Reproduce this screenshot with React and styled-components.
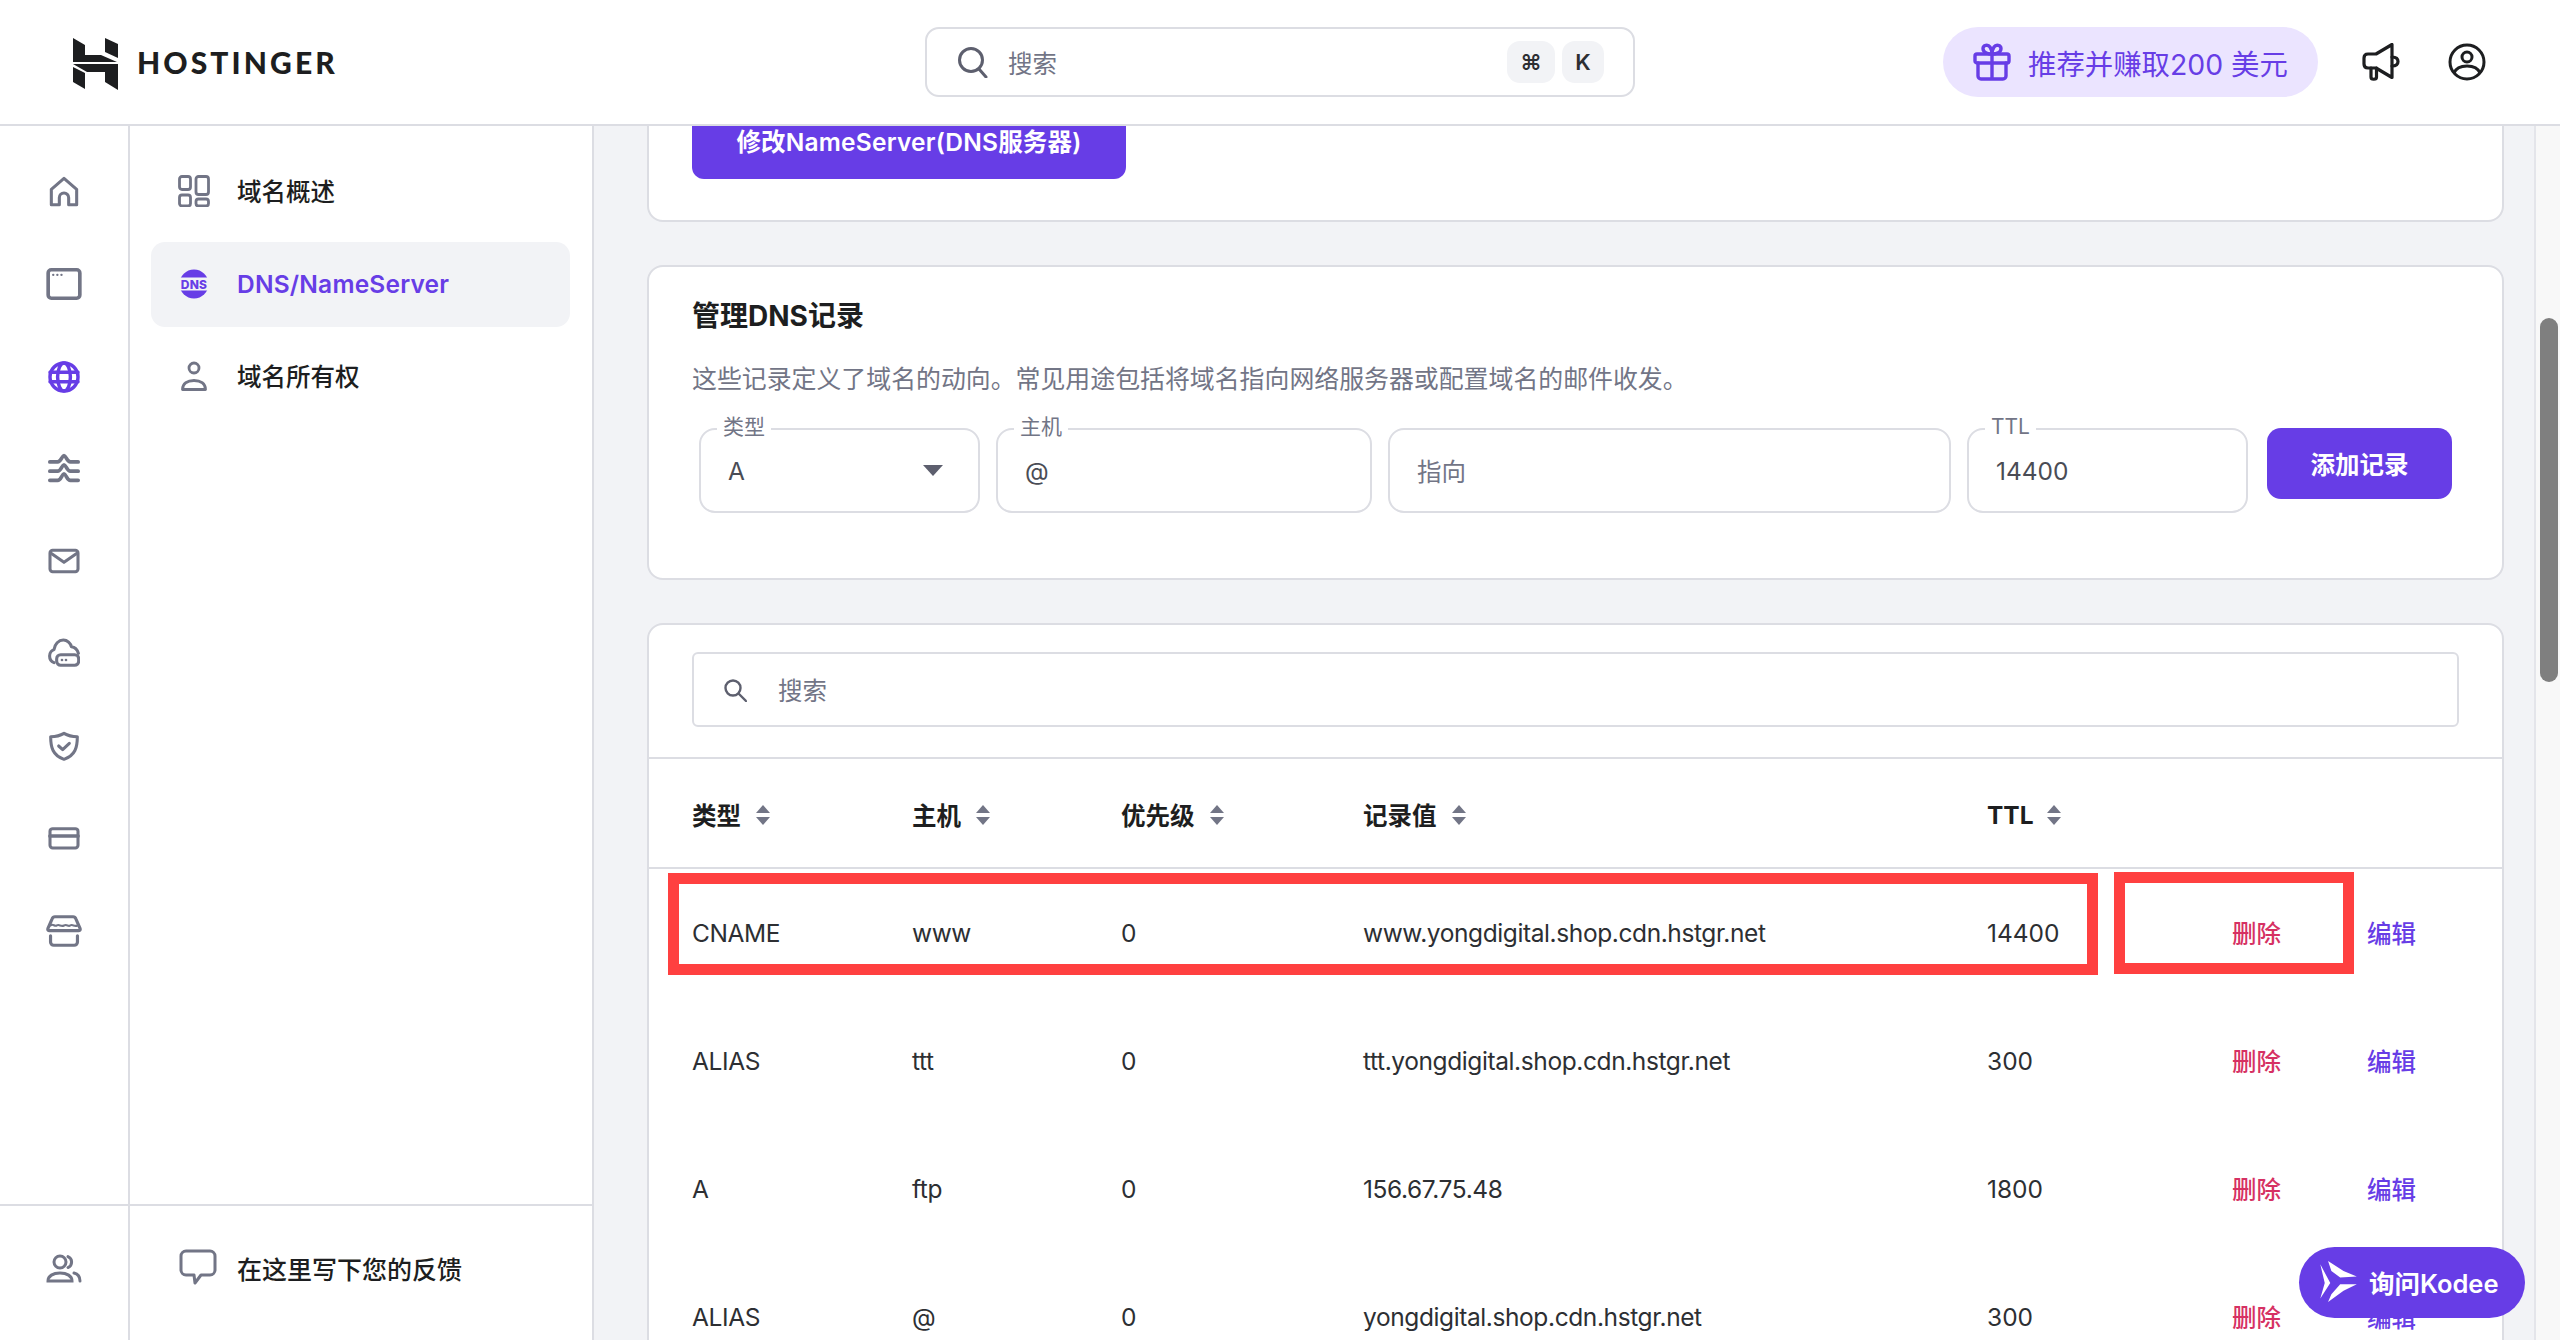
import React from "react";
import styled, { createGlobalStyle } from "styled-components";

const Global = createGlobalStyle`
  html, body { margin: 0; padding: 0; background: #fff; }
  * { box-sizing: border-box; }
  body { font-family: "Inter", "Noto Sans CJK SC", sans-serif; color: #1d1e20; }
`;

const Page = styled.div`width: 2560px; height: 1340px; display: flex; flex-direction: column; overflow: hidden; background: #fff;`;
const Header = styled.header`height: 126px; flex: none; display: flex; align-items: center; padding: 0 74px 0 64px; border-bottom: 2px solid #dcdde3; background: #fff;`;
const Brand = styled.div`width: 861px; display: flex; align-items: center; flex: none;`;
const LogoMark = styled.svg`width: 64px; height: 64px; flex: none; display: block;`;
const LogoText = styled.span`font-family: "Lato", sans-serif; font-weight: 900; font-size: 30px; letter-spacing: 3.1px; margin-left: 9px; color: #1d1e20;`;
const TopSearch = styled.div`width: 710px; height: 70px; border: 2px solid #dcdde3; border-radius: 14px; display: flex; align-items: center; padding: 0 29px 0 30px; flex: none;`;
const TopPlaceholder = styled.span`margin-left: 19px; font-size: 24.5px; color: #727586; flex: 1;`;
const Kbd = styled.span`width: ${p => p.$w}px; height: 42px; margin-left: ${p => p.$ml}px; border-radius: 13px; background: #f2f3f6; display: flex; align-items: center; justify-content: center; font-size: 22px; font-weight: 600; color: #2d2f33;`;
const Pill = styled.div`margin-left: auto; margin-right: -1px; width: 375px; height: 70px; border-radius: 35px; background: #ebe4ff; display: flex; align-items: center; padding-left: 30px; color: #673de6; font-size: 28.4px; flex: none;`;
const PillText = styled.span`margin-left: 17px; white-space: nowrap;`;
const HeaderIcon = styled.div`margin-left: ${p => p.$ml}px; display: flex; flex: none;`;

const Body = styled.div`flex: 1; display: flex; min-height: 0;`;
const Rail = styled.nav`width: 130px; flex: none; border-right: 2px solid #dcdde3; display: flex; flex-direction: column;`;
const RailList = styled.div`flex: 1; padding-top: 20px; display: flex; flex-direction: column;`;
const RailItem = styled.div`height: 92.3px; display: flex; align-items: center; justify-content: center; flex: none;`;
const Foot = styled.div`height: 136px; flex: none; border-top: 2px solid #dcdde3; display: flex; align-items: center; ${p => p.$center ? "justify-content: center; padding-bottom: 8px;" : "padding: 0 0 10px 49px;"}`;
const Panel = styled.aside`width: 464px; flex: none; border-right: 2px solid #dcdde3; display: flex; flex-direction: column;`;
const PanelList = styled.div`flex: 1; padding: 23px 22px 0 21px; display: flex; flex-direction: column;`;
const PanelItem = styled.div`height: 85px; margin-bottom: 7.5px; border-radius: 14px; display: flex; align-items: center; padding: 0 0 ${p => p.$active ? 1 : 2}px 21px; background: ${p => p.$active ? "#f2f3f6" : "transparent"}; color: ${p => p.$active ? "#673de6" : "#1d1e20"}; font-weight: ${p => p.$active ? 600 : 500}; font-size: 24.5px; letter-spacing: ${p => p.$active ? "0.2px" : "0"};`;
const IconSlot = styled.span`width: 44px; height: 44px; display: flex; align-items: center; justify-content: center; flex: none; margin-right: 21px;`;
const FootText = styled.span`font-size: 25px; font-weight: 500; margin-left: 20px;`;

const Main = styled.main`flex: 1; min-width: 0; background: #f2f3f6; overflow: hidden; padding: 0 30px 0 53px; display: flex; flex-direction: column; position: relative;`;
const Card = styled.section`background: #fff; border: 2px solid #dcdde3; border-radius: 16px; flex: none; margin-bottom: 43px;`;
const ScrolledCard = styled(Card)`margin-top: -62px; padding: 41px 43px;`;
const DnsButton = styled.div`width: 434px; height: 72px; background: #673de6; border-radius: 12px; color: #fff; font-weight: 600; font-size: 24.5px; letter-spacing: 0.2px; display: flex; align-items: center; justify-content: center; padding-bottom: 6px;`;
const FormCard = styled(Card)`padding: 28px 48px 65px 43px;`;
const Title = styled.h2`margin: 0; font-size: 28px; line-height: 42px; font-weight: 700; color: #1d1e20;`;
const Desc = styled.p`margin: 24px 0 0; font-size: 24.9px; line-height: 36px; color: #727586;`;
const FormRow = styled.div`display: grid; grid-template-columns: 281px 376px 563px 281px 185px; column-gap: 16px; margin: 31px 0 0 7px; align-items: start;`;
const Field = styled.div`height: 85px; position: relative; border: 2px solid #dcdde3; border-radius: 16px; display: flex; align-items: center; padding-left: 27px; padding-right: ${p => p.$pr || 22}px; font-size: 24.5px; color: ${p => p.$muted ? "#727586" : "#4a4c55"};`;
const Legend = styled.span`position: absolute; top: -15px; left: 16px; padding: 0 6px; background: #fff; font-size: 21px; line-height: 24px; color: #727586;`;
const FieldValue = styled.span`flex: 1;`;
const Caret = styled.span`width: 0; height: 0; border-left: 10.5px solid transparent; border-right: 10.5px solid transparent; border-top: 11px solid #5d5f6e;`;
const AddButton = styled.div`height: 71px; margin-left: 3px; width: 185px; background: #673de6; color: #fff; border-radius: 14px; display: flex; align-items: center; justify-content: center; font-size: 24.5px; font-weight: 600;`;

const TableCard = styled(Card)`position: relative; margin-bottom: 0;`;
const SearchWrap = styled.div`padding: 27px 43px 30px 43px; border-bottom: 2px solid #dcdde3;`;
const TableSearch = styled.div`height: 75px; border: 2px solid #dcdde3; border-radius: 6px; display: flex; align-items: center; padding-left: 29px; font-size: 24.5px; color: #727586;`;
const TableSearchText = styled.span`margin-left: 31px;`;
const Row = styled.div`display: grid; grid-template-columns: 220px 209px 242px 624px 245px 135px 1fr; padding-left: 43px; align-items: center; height: ${p => p.$head ? 110 : 128}px; ${p => p.$head ? "border-bottom: 2px solid #dcdde3;" : ""}`;
const HeadCell = styled.div`display: flex; align-items: center; font-size: 24.5px; font-weight: 700; color: #1d1e20; padding-top: 3px;`;
const SortIcon = styled.svg`width: 16px; height: 20px; margin-left: ${p => p.$ml || 14}px; display: block;`;
const Cell = styled.div`font-size: 24.5px; color: #2d2f33; white-space: nowrap; letter-spacing: ${p => p.$tight ? "-0.4px" : "0"};`;
const DeleteLink = styled.div`font-size: 24.5px; font-weight: 500; color: #d63163; margin-top: -2px;`;
const EditLink = styled.div`font-size: 24.5px; font-weight: 500; color: #673de6; margin-top: -2px;`;
const Mark = styled.div`position: absolute; border: 11px solid #ff4040; pointer-events: none; left: ${p => p.$l}px; top: ${p => p.$t}px; width: ${p => p.$w}px; height: 102px;`;
const Kodee = styled.div`position: absolute; left: 1705px; top: 1121px; width: 226px; height: 71px; border-radius: 36px; background: #673de6; color: #fff; display: flex; align-items: center; padding: 0 0 2px 20px; font-size: 25.5px; font-weight: 600; z-index: 2;`;
const KodeeText = styled.span`margin-left: 12px; white-space: nowrap;`;
const Track = styled.div`width: 26px; flex: none; border-left: 2px solid #e4e5ea; background: #f8f8f8; padding: 192px 2px 0 4px;`;
const Thumb = styled.div`height: 364px; border-radius: 10px; background: #7f7f7f;`;

const G = "#727586";
const P = "#673de6";
const RailIcon = ({ children, color = G, w = 32, h = 32, sw = 2.3 }) => (
  <svg width={w} height={h} viewBox="0 0 24 24" fill="none" stroke={color} strokeWidth={sw} strokeLinecap="round" strokeLinejoin="round">{children}</svg>
);

const railIcons = [
  <RailIcon key="h"><path d="M2.5 21.500V10L12 1.800 21.500 10v11.500h-6v-5.200a3.500 3.500 0 0 0-7 0v5.200z" /></RailIcon>,
  <RailIcon key="b" w={38} h={38}><rect x="2" y="3" width="20" height="18" rx="2" /><path d="M5.200 6.200h.01M7.800 6.200h.01M10.400 6.200h.01" strokeWidth="1.500" /></RailIcon>,
  <RailIcon key="g" color={P} sw={2.6}><circle cx="12" cy="12" r="10.500" /><ellipse cx="12" cy="12" rx="4.800" ry="10.500" /><path d="M1.500 8.500h21M1.500 15.500h21" /></RailIcon>,
  <RailIcon key="w" w={34} h={34} sw={2.6}><path d="M2 7h5.500c2.500 0 3-4.500 4.500-4.500S14 7 16.500 7H22" /><path d="M2 13.500h5.500c2.500 0 3-4.500 4.500-4.500s2 4.500 4.500 4.500H22" /><path d="M2 20h5.500c2.500 0 3-4.500 4.500-4.500s2 4.500 4.500 4.500H22" /></RailIcon>,
  <RailIcon key="m"><rect x="1.500" y="4" width="21" height="16" rx="2" /><path d="M2 6l10 7 10-7" /></RailIcon>,
  <RailIcon key="c"><path d="M4.500 18.500C2 17.500 1.200 15.500 1.200 13.500 1.200 11 3 9.200 4.500 8.700 5 4.500 8 1.500 11.500 1.500c3 0 5.500 2.500 6 5 2.500.3 4.500 2 5.300 5" /><rect x="6.500" y="12.500" width="16.500" height="8" rx="3" /><path d="M10.500 16.500h.01M13.500 16.500h.01" strokeWidth="2" /></RailIcon>,
  <RailIcon key="s"><path d="M12 2.500c3 1.800 6.500 2.500 10 2.500 0 8-1.500 14-10 17C3.500 19 2 13 2 5c3.500 0 7-.7 10-2.500z" /><path d="M8 12l3 2.700 5-4.700" /></RailIcon>,
  <RailIcon key="p"><rect x="1.500" y="5" width="21" height="14.500" rx="2" /><path d="M1.500 10.500h21" strokeWidth="2.800" /></RailIcon>,
  <RailIcon key="t" w={38} h={38} sw={2}><path d="M1.800 10.500L4.500 4.300A2 2 0 0 1 6.300 3h11.400a2 2 0 0 1 1.800 1.300l2.700 6.200c.3 1-.3 1.300-1 1.300H2.800c-.7 0-1.300-.3-1-1.300z" /><path d="M3.500 8.500c1.500-1.500 2.500 1 4 0s2.500 1 4.500 0 2.500 1 4 0 2.500 1 4.500 0" strokeWidth="1.300" /><path d="M3.500 15v4a2 2 0 0 0 2 2h13a2 2 0 0 0 2-2v-4" /></RailIcon>,
];

const rows = [
  ["CNAME", "www", "0", "www.yongdigital.shop.cdn.hstgr.net", "14400"],
  ["ALIAS", "ttt", "0", "ttt.yongdigital.shop.cdn.hstgr.net", "300"],
  ["A", "ftp", "0", "156.67.75.48", "1800"],
  ["ALIAS", "@", "0", "yongdigital.shop.cdn.hstgr.net", "300"],
];

const Sort = ({ ml }) => (
  <SortIcon $ml={ml} viewBox="0 0 16 20"><path d="M8 0L15 8H1z M8 20L15 12H1z" fill={G} /></SortIcon>
);

const Head = ({ label, ml }) => <HeadCell>{label}<Sort ml={ml} /></HeadCell>;

export default function App() {
  return (
    <Page>
      <Global />
      <Header>
        <Brand>
          <LogoMark viewBox="0 0 64 64">
            <g fill="#1d1e20">
              <polygon points="9,8 21,15 21,25 37,25 53,32 9,32" />
              <polygon points="41,8 54,14 54,28 41,22" />
              <polygon points="9,37 21,43 21,59 9,52" />
              <polygon points="9,34 54,34 54,60 41,52 41,42 23,42" />
            </g>
          </LogoMark>
          <LogoText>HOSTINGER</LogoText>
        </Brand>
        <TopSearch>
          <svg width="32" height="32" viewBox="0 0 32 32" fill="none" stroke="#5d5f6e" strokeWidth="3" strokeLinecap="round"><circle cx="14" cy="14" r="11.500" /><path d="M22 23l7 8" /></svg>
          <TopPlaceholder>搜索</TopPlaceholder>
          <Kbd $w={48} $ml={0}>⌘</Kbd>
          <Kbd $w={42} $ml={7}>K</Kbd>
        </TopSearch>
        <Pill>
          <svg width="38" height="38" viewBox="0 0 38 38" fill="none" stroke={P} strokeWidth="3.400" strokeLinejoin="round" strokeLinecap="round"><rect x="2" y="11" width="34" height="9" rx="2" /><path d="M5 20v13a3 3 0 0 0 3 3h22a3 3 0 0 0 3-3V20M19 11v25" /><path d="M19 11c-3 0-9-1-9-5.500C10 2 15 1 17 4c1 1.500 2 4 2 7 0-3 1-5.500 2-7 2-3 7-2 7 1.500C28 10 22 11 19 11z" /></svg>
          <PillText>推荐并赚取200 美元</PillText>
        </Pill>
        <HeaderIcon $ml={45}>
          <svg width="38" height="38" viewBox="0 0 38 38" fill="none" stroke="#1d1e20" strokeWidth="3.200" strokeLinecap="round" strokeLinejoin="round"><path d="M2 15c0-2 1-4 4-4h8L30 1.500v33L14 25H6c-3 0-4-2-4-4z" /><path d="M30 14c4 0 6 2 6 4.500S34 23 30 23" /><path d="M9 25v9c0 3 5.500 3 5.500 0v-9" /></svg>
        </HeaderIcon>
        <HeaderIcon $ml={48}>
          <svg width="38" height="38" viewBox="0 0 38 38" fill="none" stroke="#1d1e20" strokeWidth="3"><circle cx="19" cy="19" r="17" /><circle cx="19" cy="14" r="5" /><path d="M6 30c2-5 7-7 13-7s11 2 13 7" /></svg>
        </HeaderIcon>
      </Header>
      <Body>
        <Rail>
          <RailList>{railIcons.map((ic, i) => <RailItem key={i}>{ic}</RailItem>)}</RailList>
          <Foot $center>
            <svg width="36" height="30" viewBox="0 0 36 30" fill="none" stroke={G} strokeWidth="3" strokeLinecap="round"><circle cx="14" cy="8" r="6" /><path d="M2 27c0-5 5-8 12-8s12 3 12 8z" /><path d="M22 2.500a6 6 0 0 1 0 11M28 19c4 1 6 4 6 8" /></svg>
          </Foot>
        </Rail>
        <Panel>
          <PanelList>
            <PanelItem>
              <IconSlot>
                <svg width="32" height="32" viewBox="0 0 32 32" fill="none" stroke={G} strokeWidth="2.800"><rect x="1.500" y="1.500" width="11" height="13" rx="2.500" /><rect x="18" y="1.500" width="12.500" height="18" rx="2.500" /><rect x="1.500" y="20" width="11" height="11" rx="2.500" /><rect x="18" y="24" width="12.500" height="7" rx="2.500" /></svg>
              </IconSlot>
              域名概述
            </PanelItem>
            <PanelItem $active>
              <IconSlot>
                <svg width="30" height="30" viewBox="0 0 30 30"><circle cx="15" cy="15" r="14.500" fill={P} /><rect x="0" y="8.500" width="30" height="13" fill="#f2f3f6" /><text x="15" y="19.500" textAnchor="middle" fontFamily="Inter, sans-serif" fontWeight="800" fontSize="12" fill={P}>DNS</text></svg>
              </IconSlot>
              DNS/NameServer
            </PanelItem>
            <PanelItem>
              <IconSlot>
                <svg width="26" height="30" viewBox="0 0 26 30" fill="none" stroke={G} strokeWidth="2.800" strokeLinejoin="round"><circle cx="13" cy="7" r="5" /><path d="M1.500 28.500c0-6 5-9 11.500-9s11.500 3 11.500 9z" /></svg>
              </IconSlot>
              域名所有权
            </PanelItem>
          </PanelList>
          <Foot>
            <svg width="38" height="38" viewBox="0 0 38 38" fill="none" stroke={G} strokeWidth="3" strokeLinejoin="round"><path d="M7 2h24a5 5 0 0 1 5 5v14a5 5 0 0 1-5 5H22l-6 8-1-8H7a5 5 0 0 1-5-5V7a5 5 0 0 1 5-5z" /></svg>
            <FootText>在这里写下您的反馈</FootText>
          </Foot>
        </Panel>
        <Main>
          <ScrolledCard><DnsButton>修改NameServer(DNS服务器)</DnsButton></ScrolledCard>
          <FormCard>
            <Title>管理DNS记录</Title>
            <Desc>这些记录定义了域名的动向。常见用途包括将域名指向网络服务器或配置域名的邮件收发。</Desc>
            <FormRow>
              <Field $pr={35}><Legend>类型</Legend><FieldValue>A</FieldValue><Caret /></Field>
              <Field><Legend>主机</Legend><FieldValue>@</FieldValue></Field>
              <Field $muted><FieldValue>指向</FieldValue></Field>
              <Field><Legend>TTL</Legend><FieldValue>14400</FieldValue></Field>
              <AddButton>添加记录</AddButton>
            </FormRow>
          </FormCard>
          <TableCard>
            <SearchWrap>
              <TableSearch>
                <svg width="24" height="24" viewBox="0 0 24 24" fill="none" stroke="#5d5f6e" strokeWidth="2.400" strokeLinecap="round"><circle cx="10" cy="10" r="7.500" /><path d="M16 16l7 7" /></svg>
                <TableSearchText>搜索</TableSearchText>
              </TableSearch>
            </SearchWrap>
            <Row $head>
              <Head label="类型" /><Head label="主机" /><Head label="优先级" /><Head label="记录值" /><Head label="TTL" ml={12} />
            </Row>
            {rows.map(r => (
              <Row key={r[3]}>
                {r.map((c, i) => <Cell key={i} $tight={i < 4}>{c}</Cell>)}
                <DeleteLink>删除</DeleteLink>
                <EditLink>编辑</EditLink>
              </Row>
            ))}
            <Mark $l={19} $t={248} $w={1430} />
            <Mark $l={1465} $t={247} $w={240} />
          </TableCard>
          <Kodee>
            <svg width="38" height="42" viewBox="9 5 34 38" fill="#fff"><polygon points="10,8 19,25 10,39 14,25" /><polygon points="17,5 31,14 43,19 28,20 20,14" /><polygon points="17,42 31,32 43,26 28,26 20,35" /></svg>
            <KodeeText>询问Kodee</KodeeText>
          </Kodee>
        </Main>
        <Track><Thumb /></Track>
      </Body>
    </Page>
  );
}
